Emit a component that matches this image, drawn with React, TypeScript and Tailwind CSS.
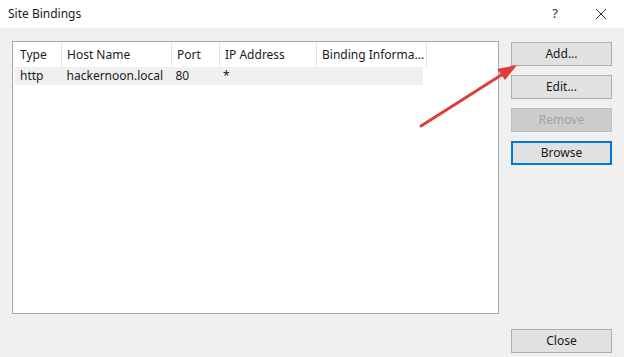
import React from 'react';

const COLUMNS = [
  { label: 'Type', width: 'w-[47px]' },
  { label: 'Host Name', width: 'w-[110px]' },
  { label: 'Port', width: 'w-[48px]' },
  { label: 'IP Address', width: 'w-[97px]' },
  { label: 'Binding Informa...', width: 'w-[110px]' },
];

const ROWS = [['http', 'hackernoon.local', '80', '*', '']];

function DialogButton({
  label,
  disabled = false,
  focused = false,
}: {
  label: string;
  disabled?: boolean;
  focused?: boolean;
}) {
  if (disabled) {
    return (
      <div className="h-[24px] w-[101px] flex items-center justify-center bg-[#cccccc] border border-[#bfbfbf] text-[#a3a3a3] text-[12px]">
        {label}
      </div>
    );
  }
  if (focused) {
    return (
      <div className="h-[24px] w-[101px] flex items-center justify-center bg-[#e1e1e1] border-2 border-[#0078d7] text-[#1a1a1a] text-[12px]">
        {label}
      </div>
    );
  }
  return (
    <div className="h-[24px] w-[101px] flex items-center justify-center bg-[#e1e1e1] border border-[#adadad] text-[#1a1a1a] text-[12px]">
      {label}
    </div>
  );
}

export default function App() {
  return (
    <div
      className="w-[624px] h-[357px] flex flex-col bg-[#f0f0f0] relative overflow-hidden"
      style={{ fontFamily: '"Noto Sans", "Open Sans", Arial, sans-serif' }}
    >
      {/* title bar */}
      <div className="h-[28px] bg-white flex items-center justify-between">
        <span className="pl-[8px] text-[12px] text-[#1a1a1a]">Site Bindings</span>
        <div className="flex items-center">
          <span className="w-[46px] text-center text-[13px] text-[#333]">?</span>
          <span className="w-[46px] flex items-center justify-center">
            <svg width="12" height="12" viewBox="0 0 12 12">
              <path d="M1 1L11 11M11 1L1 11" stroke="#333" strokeWidth="1" />
            </svg>
          </span>
        </div>
      </div>

      {/* body */}
      <div className="flex-1 flex pt-[13px] pl-[12px]">
        <div className="w-[487px] h-[273px] bg-white border border-[#a8a8a8] flex flex-col">
          <div className="flex h-[25px] pl-[2px]">
            {COLUMNS.map((c) => (
              <div
                key={c.label}
                className={`${c.width} flex items-center pl-[5px] border-r border-[#e5e5e5] text-[12px] text-[#1a1a1a] whitespace-nowrap overflow-hidden`}
              >
                {c.label}
              </div>
            ))}
          </div>
          {ROWS.map((r, i) => (
            <div key={i} className="flex h-[18px] ml-[2px] w-[408px] bg-[#f0f0f0]">
              {r.map((cell, j) => (
                <div
                  key={j}
                  className={`${COLUMNS[j].width} flex items-center pl-[5px] text-[12px] text-[#1a1a1a] whitespace-nowrap overflow-hidden`}
                >
                  {cell}
                </div>
              ))}
            </div>
          ))}
        </div>

        <div className="ml-[12px] flex flex-col justify-between pb-[4px]">
          <div className="flex flex-col gap-[9px] pt-[1px]">
            <DialogButton label="Add..." />
            <DialogButton label="Edit..." />
            <DialogButton label="Remove" disabled />
            <DialogButton label="Browse" focused />
          </div>
          <DialogButton label="Close" />
        </div>
      </div>

      {/* annotation arrow */}
      <svg className="absolute left-0 top-0" width="624" height="357" viewBox="0 0 624 357">
        <line x1="421" y1="126" x2="506" y2="72" stroke="#e03c3c" strokeWidth="3" strokeLinecap="round" />
        <polygon points="517,65 497,69 505,80" fill="#e03c3c" />
      </svg>
    </div>
  );
}
